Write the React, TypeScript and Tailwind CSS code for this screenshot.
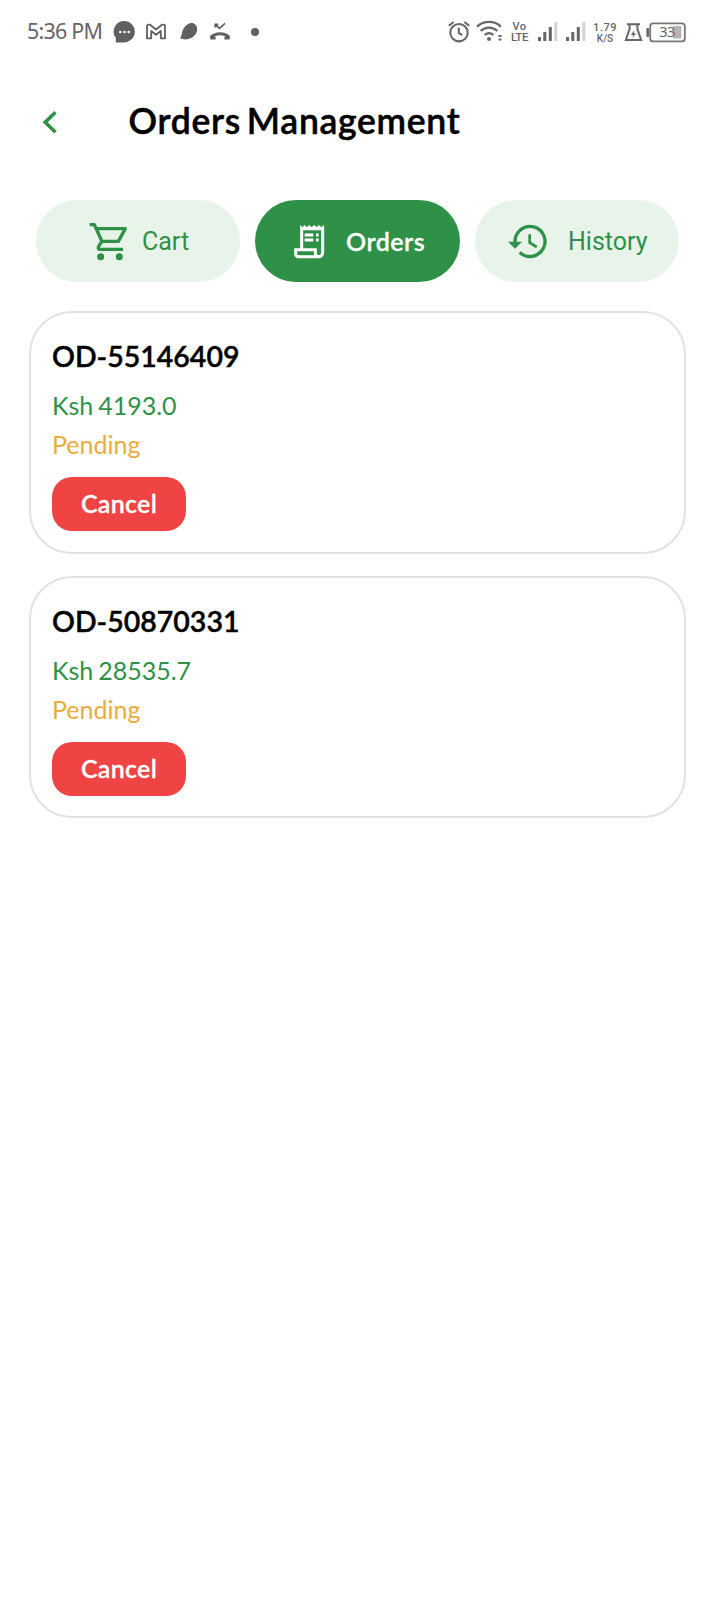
import React from 'react';

interface Order {
  id: string;
  amount: string;
  status: string;
}

const orders: Order[] = [
  { id: 'OD-55146409', amount: 'Ksh 4193.0', status: 'Pending' },
  { id: 'OD-50870331', amount: 'Ksh 28535.7', status: 'Pending' },
];

const CartIcon: React.FC = () => (
  <svg width="50" height="50" viewBox="0 0 150 150" fill="none" stroke="currentColor" strokeWidth="10" strokeLinejoin="round">
    <path d="M17 26H31L54 76H103L124 38H38" />
    <path d="M53 76 43 93Q41 100 48 100H117" />
    <circle cx="50" cy="122" r="10.5" fill="currentColor" stroke="none" />
    <circle cx="106" cy="122" r="10.5" fill="currentColor" stroke="none" />
  </svg>
);

const ReceiptIcon: React.FC = () => (
  <svg width="50" height="50" viewBox="0 0 150 150" fill="none" stroke="currentColor" strokeWidth="9">
    <path d="M47 100V38H110V108Q110 122 97 122H38Q29 122 29 113V101H88V110Q88 121 97 122" />
    <path d="M42 38V27L49 34 56 27 63 34 70 27 77 34 85 27 92 34 99 27 106 34 114 27V38Z" fill="currentColor" stroke="none" />
    <path d="M56 57H82M90 57H98M56 72H82M90 72H98" />
  </svg>
);

const HistoryIcon: React.FC = () => (
  <svg width="50" height="50" viewBox="0 0 150 150" fill="none" stroke="currentColor" strokeWidth="10">
    <path d="M39 80V77A45 45 0 1 1 53 109" />
    <path d="M18 77H60L39 98Z" fill="currentColor" stroke="none" />
    <path d="M83 55V80L104 93" strokeWidth="8" />
  </svg>
);

const SignalBars: React.FC<{ className?: string }> = ({ className }) => (
  <svg className={className} width="20" height="24" viewBox="0 0 20 24" fill="#666">
    <rect x="0" y="17" width="3" height="4" />
    <rect x="5.3" y="12" width="3" height="9" />
    <rect x="10.8" y="7" width="3" height="14" />
    <rect x="16.3" y="2" width="3" height="19" fill="#d2d2d2" />
  </svg>
);

const StatusBar: React.FC = () => (
  <div className="flex h-16 items-center pl-[27px] text-[#666]">
    <span className="mt-[-2px] w-[76px] whitespace-nowrap font-['Noto_Sans',sans-serif] text-[21.5px] leading-6 tracking-[-0.8px]">
      5:36 PM
    </span>
    <svg className="ml-[10px]" width="22" height="24" viewBox="0 0 22 24">
      <path d="M11.3 1A10.6 10.6 0 1 1 11 22.4H2.8V18A10.6 10.6 0 0 1 11.3 1Z" fill="#606060" />
      <g fill="#fff">
        <circle cx="7.3" cy="12" r="1.3" />
        <circle cx="11.5" cy="12" r="1.3" />
        <circle cx="15.7" cy="12" r="1.3" />
      </g>
    </svg>
    <svg className="ml-[11px]" width="20" height="24" viewBox="0 0 20 24" fill="none" stroke="#606060" strokeWidth="1.8" strokeLinejoin="round">
      <path d="M1 18.3V6.2Q1 4.7 2.6 4.7H4L10 9.5 16 4.7H17.4Q19 4.7 19 6.2V18.3H14.8V11L10 14.8 5.2 11V18.3Z" />
    </svg>
    <svg className="ml-[14px]" width="18" height="24" viewBox="0 0 18 24" fill="#606060">
      <path d="M0 18.3C2 16 1.6 12 3.4 8.7 6 4.3 10 2.5 13.3 3.3 17.2 4.6 18.3 9.5 16 13.5 13 18.7 6 20.9 0 18.3Z" />
    </svg>
    <svg className="ml-[12px]" width="20" height="24" viewBox="0 0 20 24" fill="none" stroke="#606060">
      <path d="M5 4.3 9.5 8.3 15 3.4M5.2 7.6V4.4H8.2" strokeWidth="1.7" />
      <path d="M1.4 17C5.5 12.6 14.5 12.6 18.6 17" strokeWidth="3" />
      <path d="M0 16 4 14.6 5.6 17.5V19.6H.4ZM20 16 16 14.6 14.4 17.5V19.6H19.6Z" fill="#606060" stroke="none" />
    </svg>
    <span className="ml-[21px] h-2 w-2 rounded-full bg-[#606060]" />
    <svg className="ml-[189px]" width="22" height="24" viewBox="0 0 22 24" fill="none" stroke="#666" strokeWidth="2.1">
      <circle cx="11" cy="12.7" r="8.7" />
      <path d="M10.8 7.7V13L14.2 15.2M.8 5.8 5.6 2M21.2 5.8 16.4 2" />
    </svg>
    <svg className="ml-[6px]" width="26" height="24" viewBox="0 0 26 24" fill="none" stroke="#666" strokeWidth="2.2">
      <path d="M1 6.6C8 .3 18 .3 25 6.6M4.7 10.9C9.7 6.4 16.3 6.4 21.3 10.9M8.7 15C11.5 12.5 14.6 12.5 17.4 15" />
      <circle cx="13" cy="19" r="2" fill="#666" stroke="none" />
      <path d="M22.5 16H25.5M22.5 19.5H25.5" strokeWidth="1.8" />
    </svg>
    <div className="ml-[8px] flex w-[19px] flex-col items-center font-['Roboto',sans-serif] text-[11.5px] font-medium leading-[10.5px]">
      <span className="text-[11px] tracking-[0.4px]">Vo</span>
      <span className="tracking-[-0.4px]">LTE</span>
    </div>
    <SignalBars className="ml-[9px]" />
    <SignalBars className="ml-[8px]" />
    <div className="ml-[7px] mt-[2px] flex w-[24px] flex-col items-center font-['Roboto',sans-serif] text-[11px] font-medium leading-[11px]">
      <span className="tracking-[0.6px]">1.79</span>
      <span className="text-[10px]">K/S</span>
    </div>
    <svg className="ml-[7px]" width="19" height="24" viewBox="0 0 19 24" fill="none" stroke="#666" strokeWidth="2">
      <path d="M3 4.2H16M5.6 4V9L1.8 20H17.2L13.4 9V4" />
      <path d="M10.3 10 7 15H9.1L8.5 18 12 13.2H9.9Z" fill="#666" stroke="none" />
    </svg>
    <svg className="ml-[3px]" width="40" height="24" viewBox="0 0 40 24" fill="none">
      <rect x="0.4" y="8" width="2.6" height="9" rx="1" fill="#666" />
      <rect x="27" y="6" width="8.3" height="12.5" fill="#b4b4b4" />
      <rect x="4.2" y="3.4" width="34.6" height="18" rx="3" stroke="#777" strokeWidth="1.8" />
      <text x="13.2" y="17.2" fontSize="14.5" fontFamily="Noto Sans, sans-serif" letterSpacing="-0.6" fill="#666">33</text>
    </svg>
  </div>
);

const Tabs: React.FC = () => (
  <nav className="ml-9 mt-[48px] flex gap-[15px] font-['Roboto',sans-serif] text-[25px] text-[#2f9147]">
    <button className="flex h-[82px] w-[204px] items-center rounded-full bg-[#e8f4e9] pl-[48px]">
      <CartIcon />
      <span className="ml-[8px] mt-[2px]">Cart</span>
    </button>
    <button className="flex h-[82px] w-[205px] items-center rounded-full bg-[#2f9147] pl-[31px] text-white">
      <ReceiptIcon />
      <span className="ml-[10px] mt-[2px] font-['Lato',sans-serif] font-semibold tracking-[0.5px] [-webkit-text-stroke:0.3px]">
        Orders
      </span>
    </button>
    <button className="flex h-[82px] w-[204px] items-center rounded-full bg-[#e8f4e9] pl-[27px]">
      <HistoryIcon />
      <span className="ml-[16px] mt-[2px]">History</span>
    </button>
  </nav>
);

const OrderCard: React.FC<{ order: Order }> = ({ order }) => (
  <article className="flex h-[242.5px] flex-col items-start rounded-[43px] border-2 border-[#e2e2e2] pl-[21px] pt-[23px]">
    <h2 className="text-[28.5px] font-semibold leading-10 text-black [-webkit-text-stroke:0.4px]">{order.id}</h2>
    <p className="mt-[9px] text-[25px] leading-10 text-[#2f9147] [word-spacing:-1.5px]">{order.amount}</p>
    <p className="text-[25px] leading-[39px] text-[#e8ad3c]">{order.status}</p>
    <button className="mt-[13px] h-[54px] w-[134px] rounded-[20px] bg-[#f04444] text-[25px] font-semibold tracking-[0.3px] text-white [-webkit-text-stroke:0.3px]">
      Cancel
    </button>
  </article>
);

const App: React.FC = () => {
  return (
    <div className="min-h-[1600px] w-[715px] bg-white font-['Lato',sans-serif]">
      <StatusBar />
      <header className="mt-[34px] flex h-[54px] items-center">
        <svg className="ml-[42px] mt-[-7px]" width="16" height="24" viewBox="0 0 16 24" fill="none" stroke="#2f9147" strokeWidth="3.6">
          <path d="M13.5 2.3 3.2 12.3 13.5 22.3" />
        </svg>
        <h1 className="-mt-2 ml-[70.5px] whitespace-nowrap text-[35.5px] font-semibold tracking-[0.7px] text-black [-webkit-text-stroke:0.5px] [word-spacing:-3.5px]">
          Orders Management
        </h1>
      </header>
      <Tabs />
      <main className="ml-[29px] mt-[29px] flex w-[657px] flex-col gap-[22px]">
        {orders.map((order) => (
          <OrderCard key={order.id} order={order} />
        ))}
      </main>
    </div>
  );
};

export default App;
